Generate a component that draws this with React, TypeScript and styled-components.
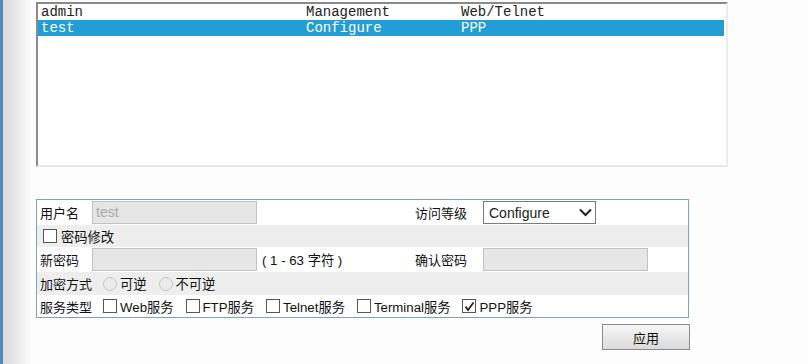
import React from "react";
import styled, { createGlobalStyle } from "styled-components";

const Global = createGlobalStyle`
  html, body { margin: 0; padding: 0; background: #fdfdfd; }
  body {
    font-family: "Liberation Sans", "Noto Sans CJK SC", sans-serif;
    font-size: 13px;
    color: #111;
  }
`;

const Page = styled.div`
  display: flex;
  width: 807px;
  height: 364px;
  overflow: hidden;
`;

const SideRail = styled.div`
  flex: none;
  width: 28px;
  border-left: 3px solid #4a8cbc;
  background: linear-gradient(to right, #d9d9d9, #e5e5e5 35%, #fbfbfb);
`;

const Main = styled.div`
  display: flex;
  flex-direction: column;
  padding: 2px 0 0 5px;
`;

const ListBox = styled.div`
  box-sizing: border-box;
  width: 692px;
  height: 165px;
  border-style: solid;
  border-width: 2px;
  border-color: #8a8a8a #ececec #e8e8e8 #8a8a8a;
  background: #fff;
`;

const ListRow = styled.div<{ $selected?: boolean }>`
  display: grid;
  grid-template-columns: 265px 155px 1fr;
  height: 16px;
  line-height: 16px;
  padding-left: 3px;
  margin-right: 2px;
  font-family: "Liberation Mono", monospace;
  font-size: 14px;
  white-space: pre;
  color: ${(p) => (p.$selected ? "#fff" : "#222")};
  background: ${(p) => (p.$selected ? "#229dd6" : "transparent")};
`;

const FormTable = styled.div`
  box-sizing: border-box;
  width: 653px;
  margin-top: 32px;
  border: 1px solid #79a3c2;
  background: #fff;
`;

const FormRow = styled.div<{ $h: number; $alt?: boolean }>`
  display: flex;
  align-items: center;
  height: ${(p) => p.$h}px;
  background: ${(p) => (p.$alt ? "#eeeeee" : "#fff")};
`;

const Cell = styled.div<{ $w: number; $pad?: number }>`
  flex: none;
  display: flex;
  align-items: center;
  width: ${(p) => p.$w}px;
  box-sizing: border-box;
  padding-left: ${(p) => p.$pad ?? 0}px;
  white-space: nowrap;
`;

const TextInput = styled.div`
  box-sizing: border-box;
  width: 165px;
  height: 23px;
  border: 1px solid #c2c2c2;
  background: #e6e6e6;
  padding-left: 3px;
  font-size: 14px;
  line-height: 21px;
  color: #a9a9a9;
`;

const Hint = styled.span`
  margin-left: 5px;
  font-size: 13.25px;
  color: #111;
`;

const Select = styled.div`
  box-sizing: border-box;
  width: 113px;
  height: 23px;
  display: flex;
  align-items: center;
  justify-content: space-between;
  border: 1px solid #7a7a7a;
  background: #fff;
  padding: 0 3px 0 5px;
  font-size: 14px;
  color: #222;
`;

const Options = styled.div<{ $left: number }>`
  display: flex;
  align-items: center;
  gap: 12px;
  margin-left: ${(p) => p.$left}px;
`;

const Option = styled.label`
  display: flex;
  align-items: center;
  gap: 3px;
  font-size: 13.25px;
  white-space: nowrap;
`;

const Box = styled.span`
  box-sizing: border-box;
  width: 14px;
  height: 14px;
  border: 1px solid #555;
  background: #fff;
  display: flex;
  align-items: center;
  justify-content: center;
`;

const Radio = styled.span`
  box-sizing: border-box;
  width: 14px;
  height: 14px;
  border-radius: 50%;
  border: 1px solid #c4c4c4;
  background: #ececec;
`;

const ButtonBar = styled.div`
  display: flex;
  justify-content: flex-end;
  width: 654px;
  margin-top: 6px;
`;

const Button = styled.div`
  box-sizing: border-box;
  width: 88px;
  height: 26px;
  border: 1px solid #8a8a8a;
  background: linear-gradient(#f7f7f7, #dadada);
  display: flex;
  align-items: center;
  justify-content: center;
  color: #111;
`;

const Check = ({ checked }: { checked?: boolean }) => (
  <Box>
    {checked && (
      <svg width="11" height="11" viewBox="0 0 11 11">
        <polyline points="1.5,5.5 4,9 9.5,1.5" fill="none" stroke="#222" strokeWidth="1.8" />
      </svg>
    )}
  </Box>
);

export default function App() {
  return (
    <>
      <Global />
      <Page>
        <SideRail />
        <Main>
          <ListBox>
            <ListRow>
              <span>admin</span>
              <span>Management</span>
              <span>Web/Telnet</span>
            </ListRow>
            <ListRow $selected>
              <span>test</span>
              <span>Configure</span>
              <span>PPP</span>
            </ListRow>
          </ListBox>

          <FormTable>
            <FormRow $h={25}>
              <Cell $w={55} $pad={3}>用户名</Cell>
              <Cell $w={320}>
                <TextInput>test</TextInput>
              </Cell>
              <Cell $w={71} $pad={3}>访问等级</Cell>
              <Cell $w={120}>
                <Select>
                  <span>Configure</span>
                  <svg width="13" height="9" viewBox="0 0 13 9">
                    <polyline points="1,1.5 6.5,7 12,1.5" fill="none" stroke="#222" strokeWidth="2" />
                  </svg>
                </Select>
              </Cell>
            </FormRow>
            <FormRow $h={22} $alt>
              <Options $left={6}>
                <Option>
                  <Check />
                  <span style={{ marginLeft: 1 }}>密码修改</span>
                </Option>
              </Options>
            </FormRow>
            <FormRow $h={25}>
              <Cell $w={55} $pad={3}>新密码</Cell>
              <Cell $w={320}>
                <TextInput />
                <Hint>( 1 - 63 字符 )</Hint>
              </Cell>
              <Cell $w={71} $pad={3}>确认密码</Cell>
              <Cell $w={170}>
                <TextInput />
              </Cell>
            </FormRow>
            <FormRow $h={23} $alt>
              <Cell $w={66} $pad={3}>加密方式</Cell>
              <Options $left={0}>
                <Option>
                  <Radio />
                  <span>可逆</span>
                </Option>
                <Option>
                  <Radio />
                  <span>不可逆</span>
                </Option>
              </Options>
            </FormRow>
            <FormRow $h={22}>
              <Cell $w={66} $pad={3}>服务类型</Cell>
              <Options $left={0}>
                <Option>
                  <Check />
                  <span>Web服务</span>
                </Option>
                <Option>
                  <Check />
                  <span>FTP服务</span>
                </Option>
                <Option>
                  <Check />
                  <span>Telnet服务</span>
                </Option>
                <Option>
                  <Check />
                  <span>Terminal服务</span>
                </Option>
                <Option>
                  <Check checked />
                  <span>PPP服务</span>
                </Option>
              </Options>
            </FormRow>
          </FormTable>

          <ButtonBar>
            <Button>应用</Button>
          </ButtonBar>
        </Main>
      </Page>
    </>
  );
}
